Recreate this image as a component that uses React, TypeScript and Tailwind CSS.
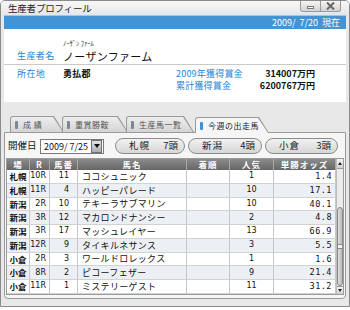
import { ReactNode } from "react";

const JP = "font-['Noto_Sans_CJK_JP','Noto_Sans',sans-serif]";

const rows = [
  { ba: "札幌", r: "10R", no: "11", name: "ココシュニック", pop: "1", odds: "1.4" },
  { ba: "札幌", r: "11R", no: "4", name: "ハッピーパレード", pop: "10", odds: "17.1" },
  { ba: "新潟", r: "2R", no: "10", name: "テキーラサブマリン", pop: "10", odds: "40.1" },
  { ba: "新潟", r: "3R", no: "12", name: "マカロンドナンシー", pop: "2", odds: "4.8" },
  { ba: "新潟", r: "3R", no: "17", name: "マッシュレイヤー", pop: "13", odds: "66.9" },
  { ba: "新潟", r: "12R", no: "9", name: "タイキルネサンス", pop: "3", odds: "5.5" },
  { ba: "小倉", r: "2R", no: "3", name: "ワールドロレックス", pop: "1", odds: "1.6" },
  { ba: "小倉", r: "8R", no: "2", name: "ピコーフェザー", pop: "9", odds: "21.4" },
  { ba: "小倉", r: "11R", no: "1", name: "ミステリーゲスト", pop: "11", odds: "31.2" },
];

const cols = "grid grid-cols-[23px_20px_28px_109px_43px_44px_62px]";
const NUM = "font-['DejaVu_Sans',sans-serif] text-[8px]";

const Tab = ({ label, width, active }: { label: string; width: string; active?: boolean }) => (
  <div
    className={`${width} h-[16px] bg-[#9a9a9a] pt-[1px] pl-[1px] rounded-tl-[3px] [clip-path:polygon(0_0,calc(100%-10px)_0,100%_100%,0_100%)] ${
      active ? "relative z-10 -mb-[1px]" : ""
    }`}
  >
    <div
      className={`h-full flex items-center gap-[5px] pl-[4px] rounded-tl-[2px] [clip-path:polygon(0_0,calc(100%-11px)_0,calc(100%-1px)_100%,0_100%)] ${
        active ? "bg-[#f6f6f6]" : "bg-gradient-to-b from-[#eeeeee] to-[#d4d4d4]"
      }`}
    >
      <span className={`w-[3px] h-[8px] rounded-[1px] shrink-0 ${active ? "bg-[#3f90de]" : "bg-[#7d8896]"}`} />
      <span className={`text-[8px] leading-none tracking-[0.5px] whitespace-nowrap ${active ? "text-[#222]" : "text-[#555]"}`}>{label}</span>
    </div>
  </div>
);

const Pill = ({ place, count, width }: { place: string; count: string; width: string }) => (
  <div
    className={`${width} h-[16px] rounded-full border border-[#8c8c8c] bg-gradient-to-b from-[#f2f2f2] to-[#d6d6d6] flex items-center justify-between pl-[13px] pr-[6px] text-[9.5px] leading-none text-[#222]`}
  >
    <span className="tracking-[1px]">{place}</span>
    <span>{count}</span>
  </div>
);

const Cell = ({ children, className }: { children: ReactNode; className?: string }) => (
  <div className={`border-r border-[#c6c6c6] flex items-center overflow-hidden whitespace-nowrap ${className ?? ""}`}>{children}</div>
);

export default function App() {
  return (
    <div className={`${JP} w-[350px] h-[307px] bg-[#e8e8e8] border border-[#8a8a8a] rounded-t-[5px] flex flex-col overflow-hidden text-[#111]`}>
      {/* title bar */}
      <div className="h-[14px] flex items-start bg-gradient-to-b from-[#f8f8f8] to-[#e6e6e6]">
        <span className="pl-[7px] text-[9.5px] leading-[14px] tracking-[-0.2px] text-[#222]">生産者プロフィール</span>
        <div className="ml-auto mr-[8px] flex">
          <div className="w-[21px] h-[11px] border border-t-0 border-[#9a9a9a] rounded-bl-[3px] bg-gradient-to-b from-[#f4f4f4] to-[#d4d4d4] flex items-end justify-center pb-[2px]">
            <span className="w-[7px] h-[3px] border border-[#777] bg-white" />
          </div>
          <div className="w-[20px] h-[11px] border border-t-0 border-l-0 border-[#9a9a9a] rounded-br-[3px] bg-gradient-to-b from-[#f4f4f4] to-[#d4d4d4] flex items-center justify-center">
            <svg width="9" height="8" viewBox="0 0 9 8">
              <path d="M1 0.5 L8 7.5 M8 0.5 L1 7.5" stroke="#666" strokeWidth="2" />
            </svg>
          </div>
        </div>
      </div>

      <div className="flex-1 px-[3px] flex flex-col">
        {/* blue bar */}
        <div className="h-[14px] bg-[#4494d3] border-t border-[#9cc8ec] flex items-center justify-end pr-[6px] text-[9px] leading-none text-white">
          2009/&nbsp;&nbsp;7/20&nbsp;&nbsp;現在
        </div>

        {/* info */}
        <div className="h-[73px] bg-white">
          <div className="border-b border-[#cacaca]">
            <div className="pt-[10px] pl-[59px] text-[6.5px] leading-[9px] text-[#222]">ﾉｰｻﾞﾝ ﾌｧｰﾑ</div>
            <div className="h-[16px] flex items-center pl-[13px]">
              <span className="w-[46px] text-[9px] tracking-[0.4px] text-[#2484d8]">生産者名</span>
              <span className="text-[11px] tracking-[0.3px] leading-none">ノーザンファーム</span>
            </div>
          </div>
          <div className="flex pt-[3px] pl-[13px] text-[9px] leading-[12px]">
            <div className="w-[159px] flex">
              <span className="w-[46px] tracking-[0.4px] text-[#2484d8]">所在地</span>
              <span className="font-bold tracking-[0.3px]">勇払郡</span>
            </div>
            <div className="w-[139px] flex flex-col">
              <div className="flex justify-between">
                <span className="text-[#2484d8] tracking-[0.2px]">2009年獲得賞金</span>
                <span className="font-bold">314007万円</span>
              </div>
              <div className="flex justify-between">
                <span className="text-[#2484d8] tracking-[0.2px]">累計獲得賞金</span>
                <span className="font-bold">6200767万円</span>
              </div>
            </div>
          </div>
        </div>

        {/* tabs */}
        <div className="mt-[15px] h-[15px] flex items-end pl-[6px]">
          <Tab label="成 績" width="w-[54px]" />
          <Tab label="重賞勝鞍" width="w-[66px] -ml-[2px]" />
          <Tab label="生産馬一覧" width="w-[68px] -ml-[2px]" />
          <Tab label="今週の出走馬" width="w-[74px] ml-[1px]" active />
        </div>

        {/* panel */}
        <div className="h-[167px] border border-[#9a9a9a] rounded-b-[4px] bg-[#f6f6f6] flex flex-col">
          <div className="mt-[5px] h-[16px] flex items-center pl-[3px]">
            <span className="text-[9.5px] leading-none w-[32px]">開催日</span>
            <div className="w-[64px] h-[15px] border border-[#7a7a7a] bg-white flex items-center">
              <span className="flex-1 pl-[3px] text-[9px] leading-none whitespace-nowrap">2009/ 7/25</span>
              <div className="w-[11px] h-[13px] mr-[1px] bg-gradient-to-b from-[#e2e4e8] to-[#a9adb4] border border-[#6f6f6f] flex items-center justify-center">
                <svg width="6" height="4" viewBox="0 0 6 4">
                  <path d="M0 0 H6 L3 4 Z" fill="#111" />
                </svg>
              </div>
            </div>
            <div className="ml-[11px] flex gap-[3px]">
              <Pill place="札幌" count="7頭" width="w-[70px]" />
              <Pill place="新潟" count="4頭" width="w-[74px]" />
              <Pill place="小倉" count="3頭" width="w-[73px]" />
            </div>
          </div>

          {/* table */}
          <div className="mt-[4px] ml-[1px] w-[338px] h-[137px] border border-[#9a9a9a] flex bg-white">
            <div className="w-[329px] flex flex-col">
              <div className={`${cols} h-[11px] bg-gradient-to-b from-[#8c8c8c] to-[#666] text-white text-[8.5px] font-bold leading-none`}>
                {["場", "R", "馬番", "馬名", "着順", "人気", "単勝オッズ"].map((h) => (
                  <div key={h} className="border-r border-[#a8a8a8] flex items-center justify-center tracking-[1px]">
                    {h}
                  </div>
                ))}
              </div>
              {rows.map((r, i) => (
                <div
                  key={i}
                  className={`${cols} h-[13.75px] border-b border-[#d2d2d2] text-[9px] leading-none ${
                    i % 2 === 1 ? "bg-[#ecf0f5]" : "bg-white"
                  }`}
                >
                  <Cell className="justify-center text-[8.5px] font-bold">{r.ba}</Cell>
                  <Cell className={`justify-end pr-[3px] ${NUM}`}>{r.r}</Cell>
                  <Cell className={`justify-end pr-[8px] ${NUM}`}>{r.no}</Cell>
                  <Cell className="pl-[4px] tracking-[0.3px]">{r.name}</Cell>
                  <Cell>{""}</Cell>
                  <Cell className={`justify-center ${NUM}`}>{r.pop}</Cell>
                  <Cell className="justify-end pr-[3px] font-['DejaVu_Sans_Mono',monospace] text-[8.5px] tracking-[0.5px]">{r.odds}</Cell>
                </div>
              ))}
            </div>
            {/* scrollbar */}
            <div className="w-[8px] flex flex-col bg-[#ececec] border-l border-[#bdbdbd]">
              <div className="h-[10px] bg-gradient-to-b from-[#f4f4f4] to-[#d0d0d0] border-b border-[#999] flex items-center justify-center">
                <svg width="4" height="3" viewBox="0 0 4 3">
                  <path d="M0 3 H4 L2 0 Z" fill="#222" />
                </svg>
              </div>
              <div className="h-[38px]" />
              <div className="flex-1 rounded-[3px] border border-[#8a8a8a] bg-gradient-to-r from-[#e0e0e0] to-[#b8b8b8] flex items-center justify-center">
                <span className="w-[4px] h-[5px] border-y border-[#888] bg-[#f4f4f4]" />
              </div>
              <div className="h-[8px] bg-gradient-to-b from-[#f4f4f4] to-[#d0d0d0] border-t border-[#999] flex items-center justify-center">
                <svg width="4" height="3" viewBox="0 0 4 3">
                  <path d="M0 0 H4 L2 3 Z" fill="#222" />
                </svg>
              </div>
            </div>
          </div>
        </div>
      </div>
    </div>
  );
}
